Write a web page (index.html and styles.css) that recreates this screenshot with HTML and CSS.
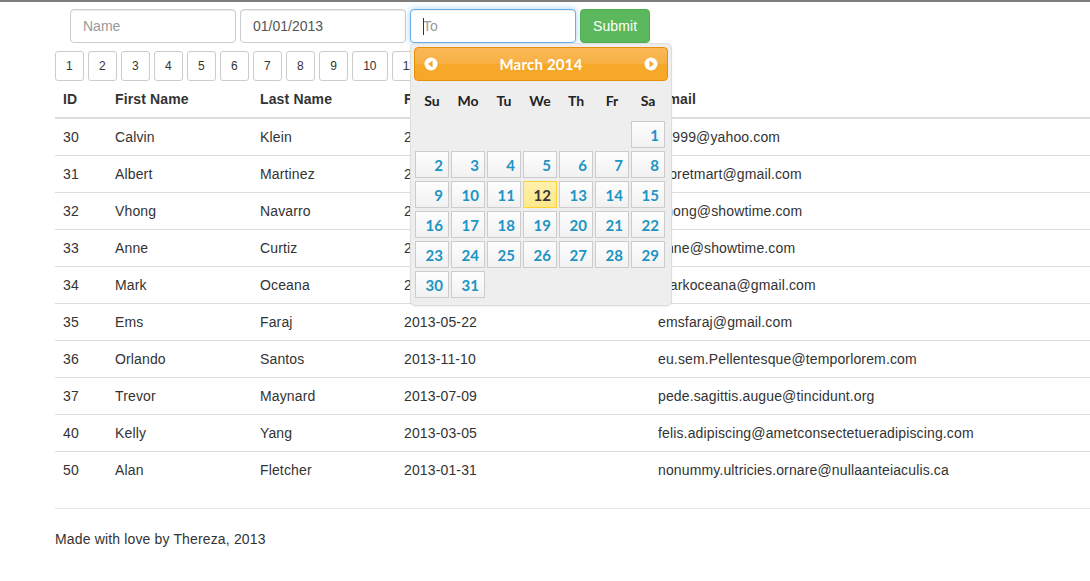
FILE: index.html
```html
<!DOCTYPE html>
<html>
<head>
<meta charset="utf-8">
<title>Users</title>
<link rel="stylesheet" href="styles.css">
</head>
<body>
<div class="page">
  <form class="search">
    <input class="field" type="text" placeholder="Name">
    <input class="field" type="text" value="01/01/2013">
    <span class="to-wrap">
      <input class="field field-focus" type="text" placeholder="To">
      <span class="caret"></span>
      <div class="datepicker">
        <div class="dp-header">
          <span class="dp-nav">
            <svg width="16" height="16" viewBox="0 0 16 16"><circle cx="8" cy="8" r="6.5" fill="#fff"/><polygon points="5,8 9.5,4.6 9.5,11.4" fill="#f6a828"/></svg>
          </span>
          <span class="dp-title">March 2014</span>
          <span class="dp-nav">
            <svg width="16" height="16" viewBox="0 0 16 16"><circle cx="8" cy="8" r="6.5" fill="#fff"/><polygon points="11,8 6.5,4.6 6.5,11.4" fill="#f6a828"/></svg>
          </span>
        </div>
        <div class="dp-grid">
          <span class="dp-dow">Su</span><span class="dp-dow">Mo</span><span class="dp-dow">Tu</span><span class="dp-dow">We</span><span class="dp-dow">Th</span><span class="dp-dow">Fr</span><span class="dp-dow">Sa</span>
          <span></span><span></span><span></span><span></span><span></span><span></span><a class="dp-day">1</a>
          <a class="dp-day">2</a><a class="dp-day">3</a><a class="dp-day">4</a><a class="dp-day">5</a><a class="dp-day">6</a><a class="dp-day">7</a><a class="dp-day">8</a>
          <a class="dp-day">9</a><a class="dp-day">10</a><a class="dp-day">11</a><a class="dp-day dp-today">12</a><a class="dp-day">13</a><a class="dp-day">14</a><a class="dp-day">15</a>
          <a class="dp-day">16</a><a class="dp-day">17</a><a class="dp-day">18</a><a class="dp-day">19</a><a class="dp-day">20</a><a class="dp-day">21</a><a class="dp-day">22</a>
          <a class="dp-day">23</a><a class="dp-day">24</a><a class="dp-day">25</a><a class="dp-day">26</a><a class="dp-day">27</a><a class="dp-day">28</a><a class="dp-day">29</a>
          <a class="dp-day">30</a><a class="dp-day">31</a>
        </div>
      </div>
    </span>
    <button class="btn-submit" type="button">Submit</button>
  </form>

  <div class="pages">
    <a class="pg">1</a><a class="pg">2</a><a class="pg">3</a><a class="pg">4</a><a class="pg">5</a><a class="pg">6</a><a class="pg">7</a><a class="pg">8</a><a class="pg">9</a><a class="pg">10</a><a class="pg">11</a><a class="pg">12</a><a class="pg">13</a><a class="pg">14</a><a class="pg">15</a>
  </div>

  <table class="users">
    <thead>
      <tr>
        <th class="c-id">ID</th>
        <th class="c-first">First Name</th>
        <th class="c-last">Last Name</th>
        <th class="c-date">From</th>
        <th>Email</th>
      </tr>
    </thead>
    <tbody>
      <tr><td>30</td><td>Calvin</td><td>Klein</td><td>2013-04-12</td><td>ck999@yahoo.com</td></tr>
      <tr><td>31</td><td>Albert</td><td>Martinez</td><td>2013-06-18</td><td>albretmart@gmail.com</td></tr>
      <tr><td>32</td><td>Vhong</td><td>Navarro</td><td>2013-08-02</td><td>vhong@showtime.com</td></tr>
      <tr><td>33</td><td>Anne</td><td>Curtiz</td><td>2013-02-14</td><td>anne@showtime.com</td></tr>
      <tr><td>34</td><td>Mark</td><td>Oceana</td><td>2013-09-27</td><td>markoceana@gmail.com</td></tr>
      <tr><td>35</td><td>Ems</td><td>Faraj</td><td>2013-05-22</td><td>emsfaraj@gmail.com</td></tr>
      <tr><td>36</td><td>Orlando</td><td>Santos</td><td>2013-11-10</td><td>eu.sem.Pellentesque@temporlorem.com</td></tr>
      <tr><td>37</td><td>Trevor</td><td>Maynard</td><td>2013-07-09</td><td>pede.sagittis.augue@tincidunt.org</td></tr>
      <tr><td>40</td><td>Kelly</td><td>Yang</td><td>2013-03-05</td><td>felis.adipiscing@ametconsectetueradipiscing.com</td></tr>
      <tr><td>50</td><td>Alan</td><td>Fletcher</td><td>2013-01-31</td><td>nonummy.ultricies.ornare@nullaanteiaculis.ca</td></tr>
    </tbody>
  </table>

  <footer class="foot">Made with love by Thereza, 2013</footer>
</div>
</body>
</html>
```

FILE: styles.css
```css
* { box-sizing: border-box; }

html, body {
  margin: 0;
  padding: 0;
  background: #fff;
}

body {
  border-top: 2px solid #7d7d7d;
  font-family: "Liberation Sans", Arial, sans-serif;
  font-size: 14px;
  line-height: 20px;
  color: #333;
  overflow: hidden;
}

.page {
  padding-left: 55px;
}

/* search form */
.search {
  display: flex;
  gap: 4px;
  margin: 7px 0 0 15px;
}

.field {
  width: 166px;
  height: 34px;
  padding: 6px 12px;
  font-family: "Liberation Sans", Arial, sans-serif;
  font-size: 14px;
  line-height: 20px;
  color: #555;
  background: #fff;
  border: 1px solid #ccc;
  border-radius: 4px;
  box-shadow: inset 0 1px 1px rgba(0,0,0,0.075);
  outline: none;
}

.field::placeholder { color: #999; }

.field-focus {
  border-color: #66afe9;
  box-shadow: inset 0 1px 1px rgba(0,0,0,0.075), 0 0 6px rgba(102,175,233,0.6);
}

.to-wrap {
  position: relative;
  display: block;
}

.caret {
  position: absolute;
  left: 13px;
  top: 9px;
  width: 1px;
  height: 17px;
  background: #333;
}

.btn-submit {
  height: 34px;
  padding: 6px 12px;
  font-family: "Liberation Sans", Arial, sans-serif;
  font-size: 14px;
  line-height: 20px;
  color: #fff;
  background: #5cb85c;
  border: 1px solid #4cae4c;
  border-radius: 4px;
  letter-spacing: 0.1px;
}

/* datepicker */
.datepicker {
  position: absolute;
  left: 0;
  top: 34px;
  width: 262px;
  padding: 3px 3px 7px 3px;
  background: #eee;
  border: 1px solid #ddd;
  border-radius: 5px;
  box-shadow: 0 1px 2px rgba(0,0,0,0.06);
  font-family: Lato, "Open Sans", sans-serif;
  z-index: 10;
}

.dp-header {
  height: 34px;
  display: flex;
  align-items: center;
  justify-content: space-between;
  padding: 0 8px;
  border: 1px solid #e78f08;
  border-radius: 4px;
  background: linear-gradient(#f9b857 0%, #f8b045 48%, #f6a828 52%, #f6a828 100%);
  color: #fff;
}

.dp-nav {
  display: flex;
  width: 16px;
  height: 16px;
}

.dp-title {
  font-weight: bold;
  font-size: 15px;
  line-height: 20px;
  letter-spacing: 0.2px;
}

.dp-grid {
  display: grid;
  grid-template-columns: repeat(7, 34px);
  grid-template-rows: 37px repeat(6, 27px);
  column-gap: 2px;
  row-gap: 3px;
  margin-left: 1px;
  width: 250px;
}

.dp-dow {
  display: flex;
  align-items: center;
  justify-content: center;
  font-weight: bold;
  font-size: 14px;
  color: #222;
  padding-top: 3px;
}

.dp-day {
  display: block;
  text-align: right;
  padding: 3px 5px 0 0;
  font-weight: bold;
  font-size: 15px;
  line-height: 20px;
  color: #1c94c4;
  border: 1px solid #ccc;
  background: linear-gradient(#fdfdfd 0%, #f8f8f8 50%, #f1f1f1 100%);
}

.dp-today {
  color: #363636;
  border-color: #fed22f;
  background: linear-gradient(#fef1ae 0%, #feec9c 50%, #fde88c 100%);
}

/* pagination */
.pages {
  display: flex;
  gap: 4.33px;
  margin-top: 8px;
}

.pg {
  display: block;
  padding: 5px 10px;
  font-size: 12px;
  line-height: 18px;
  color: #333;
  background: #fff;
  border: 1px solid #ccc;
  border-radius: 3px;
}

/* table */
.users {
  width: 100%;
  border-collapse: collapse;
  border-spacing: 0;
  margin-bottom: 20px;
  letter-spacing: 0.14px;
}

.users th,
.users td {
  padding: 8px;
  line-height: 20px;
  text-align: left;
  vertical-align: top;
  border-top: 1px solid #ddd;
}

.users thead th {
  border-top: 0;
  border-bottom: 2px solid #ddd;
  font-weight: bold;
  vertical-align: bottom;
}

.users tbody tr:first-child td {
  border-top: 1px solid #ddd;
}

.c-id { width: 52px; }
.c-first { width: 145px; }
.c-last { width: 144px; }
.c-date { width: 254px; }

.foot {
  border-top: 1px solid #e5e5e5;
  padding-top: 20px;
  padding-bottom: 20px;
  letter-spacing: 0.15px;
}
```
